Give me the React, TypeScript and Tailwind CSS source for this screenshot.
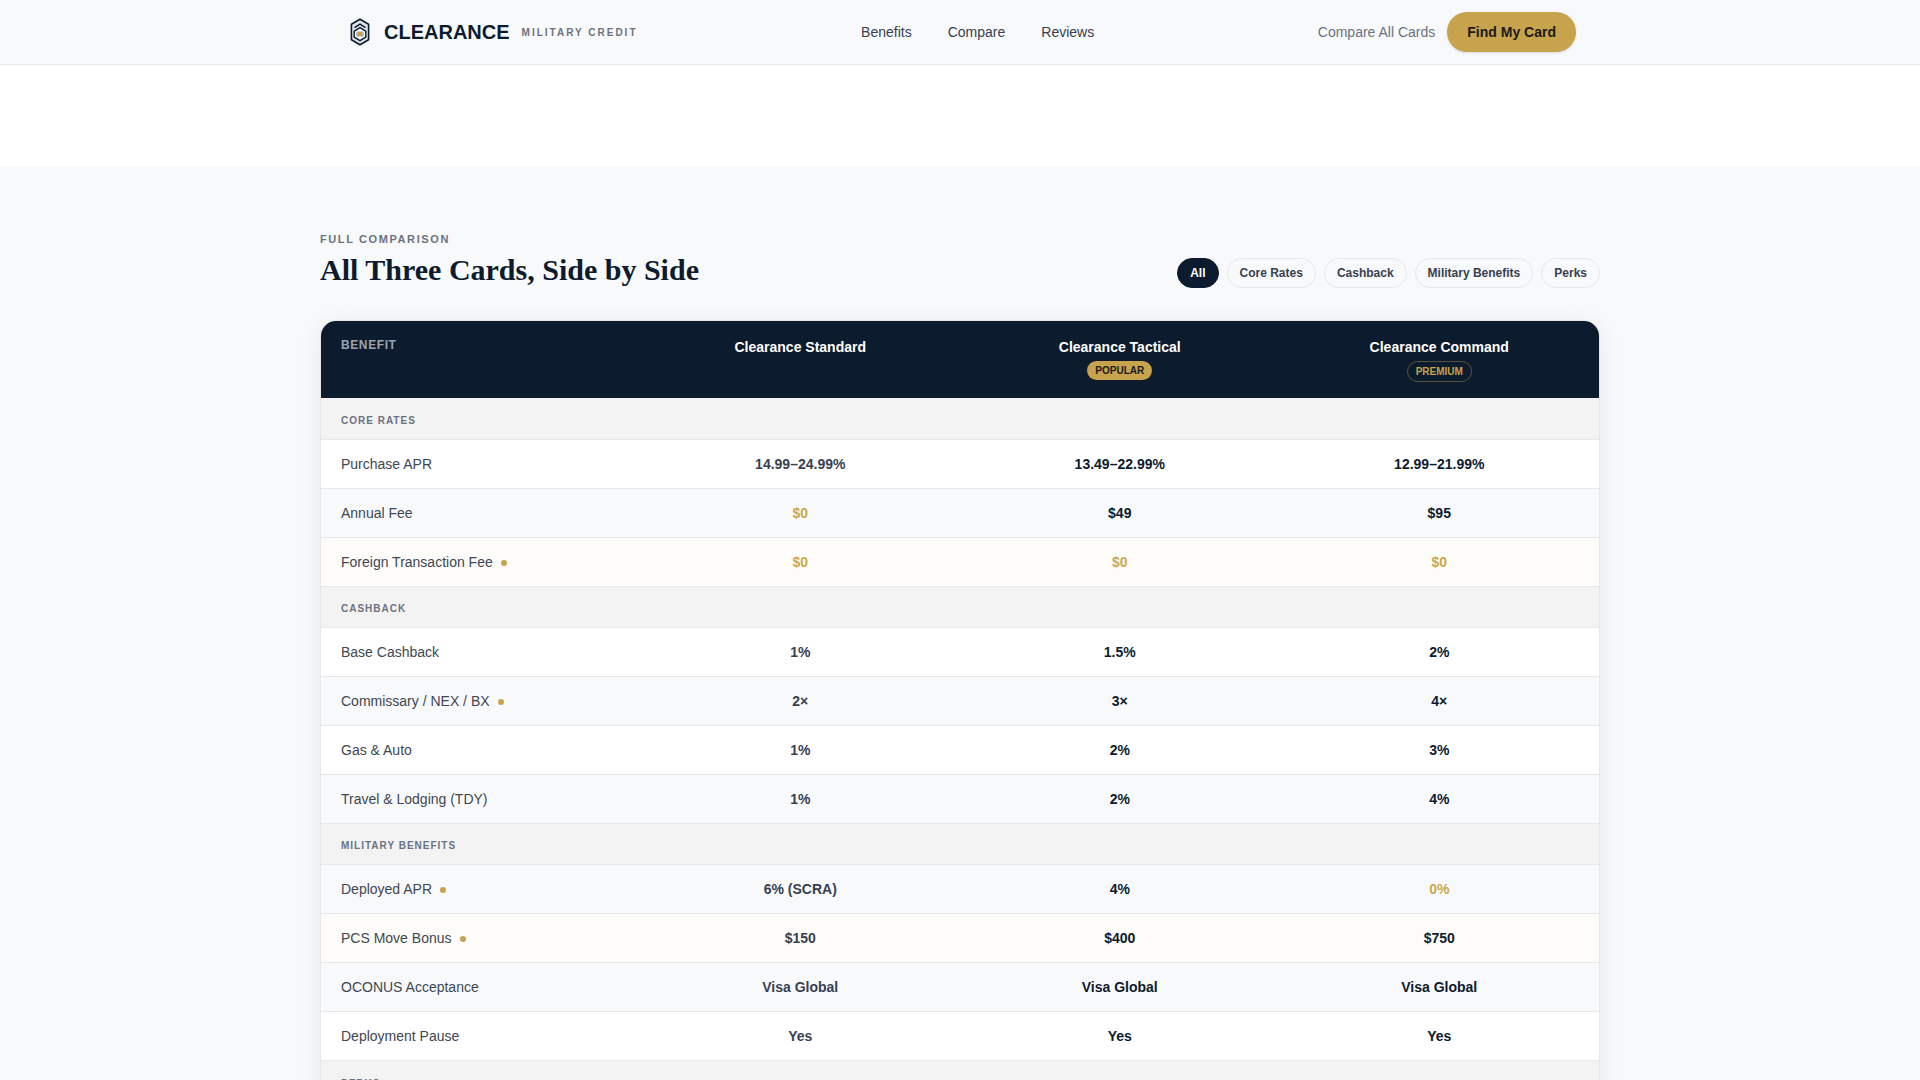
const sections = [
  {
    title: "Core Rates",
    height: "h-[41.5px]",
    rows: [
      { label: "Purchase APR", values: ["14.99–24.99%", "13.49–22.99%", "12.99–21.99%"] },
      { label: "Annual Fee", values: ["$0", "$49", "$95"], gold: [0] },
      { label: "Foreign Transaction Fee", values: ["$0", "$0", "$0"], gold: [0, 1, 2], dot: true, highlight: true },
    ],
  },
  {
    title: "Cashback",
    height: "h-[41.5px]",
    rows: [
      { label: "Base Cashback", values: ["1%", "1.5%", "2%"] },
      { label: "Commissary / NEX / BX", values: ["2×", "3×", "4×"], dot: true },
      { label: "Gas & Auto", values: ["1%", "2%", "3%"] },
      { label: "Travel & Lodging (TDY)", values: ["1%", "2%", "4%"] },
    ],
  },
  {
    title: "Military Benefits",
    height: "h-[41px]",
    rows: [
      { label: "Deployed APR", values: ["6% (SCRA)", "4%", "0%"], gold: [2], dot: true },
      { label: "PCS Move Bonus", values: ["$150", "$400", "$750"], dot: true, highlight: true },
      { label: "OCONUS Acceptance", values: ["Visa Global", "Visa Global", "Visa Global"] },
      { label: "Deployment Pause", values: ["Yes", "Yes", "Yes"] },
    ],
  },
  {
    title: "Perks",
    height: "h-[41.5px]",
    rows: [{ label: "Lounge Access", values: ["—", "Yes", "Yes"] }],
  },
]

const filters = ["All", "Core Rates", "Cashback", "Military Benefits", "Perks"]

function Logo() {
  return (
    <svg width="22" height="28" viewBox="0 0 22 28" fill="none">
      <path d="M11 1.2 19.6 6.2V21.8L11 26.8 2.4 21.8V6.2Z" fill="#dfe3e8" stroke="#0d1b2e" strokeWidth="1.6" />
      <path d="M5.5 9.6 11 6.2 16.5 9.6" stroke="#0d1b2e" strokeWidth="1.5" />
      <path d="M5.2 13.2 11 9.6 16.8 13.2V19.2L11 22.6 5.2 19.2Z" fill="#f8f9fb" stroke="#0d1b2e" strokeWidth="1.4" />
      <rect x="8.8" y="13.6" width="4.4" height="4.8" fill="#c6a34c" />
      <path d="M7.5 13.6H8.8V18.4H7.5ZM13.2 13.6H14.5V18.4H13.2Z" fill="#94a3b8" />
    </svg>
  )
}

function Dot() {
  return <span className="ml-2 inline-block h-[6px] w-[6px] rounded-full bg-[#c6a34c] align-[1px]" />
}

export default function App() {
  return (
    <div className="h-screen overflow-hidden bg-white font-['Liberation_Sans',Arial,sans-serif] text-[#0d1b2e]">
      <nav className="h-[65px] border-b border-[#e5e7eb] bg-[#f8f9fb]">
        <div className="mx-auto flex h-full max-w-[1280px] items-center justify-between pr-6 pl-[29px]">
          <div className="flex items-center">
            <Logo />
            <span className="ml-[13px] text-xl font-bold">CLEARANCE</span>
            <span className="ml-3 text-[10px] font-semibold tracking-[2px] text-[#6b7280]">MILITARY CREDIT</span>
          </div>
          <div className="flex items-center gap-9 text-sm text-[#374151]">
            <a>Benefits</a>
            <a>Compare</a>
            <a>Reviews</a>
          </div>
          <div className="flex items-center gap-3">
            <a className="text-sm text-[#6b7280]">Compare All Cards</a>
            <button className="h-10 rounded-full bg-[#c6a34c] px-5 text-sm font-bold text-[#1a1a1a] shadow-sm">Find My Card</button>
          </div>
        </div>
      </nav>

      <div className="h-[102px] bg-white" />

      <section className="h-full bg-[#f8f9fb] pt-[64px]">
        <div className="mx-auto max-w-[1280px]">
          <div className="mb-8 flex items-end justify-between">
            <div>
              <p className="text-[11px] font-semibold tracking-[1.6px] text-[#6b7280]">FULL COMPARISON</p>
              <h2 className="mt-1 font-['Liberation_Serif',serif] text-3xl font-bold">All Three Cards, Side by Side</h2>
            </div>
            <div className="flex items-center gap-2">
              {filters.map((f, i) => (
                <button
                  key={f}
                  className={
                    i === 0
                      ? "h-[30px] rounded-full border border-[#0d1b2e] bg-[#0d1b2e] px-3 text-xs font-semibold text-white"
                      : "h-[30px] rounded-full border border-[#e5e7eb] px-3 text-xs font-semibold text-[#374151]"
                  }
                >
                  {f}
                </button>
              ))}
            </div>
          </div>

          <div className="overflow-hidden rounded-2xl border border-[#e5e7eb] bg-white shadow-[0_4px_24px_rgba(13,27,46,0.07)]">
            <table className="w-full table-fixed border-separate border-spacing-0 text-sm">
              <thead>
                <tr className="h-[77.5px] bg-[#0d1b2e] align-top text-white">
                  <th className="px-5 pt-4 text-left text-xs font-semibold tracking-[0.6px] text-[#9ca3af]">BENEFIT</th>
                  <th className="px-5 pt-4 font-semibold">Clearance Standard</th>
                  <th className="px-5 pt-4 font-semibold">
                    Clearance Tactical
                    <div className="mt-[2px]">
                      <span className="inline-block rounded-full bg-[#c6a34c] px-2 py-[3px] text-[10px] leading-[13px] font-bold text-[#1a1a1a]">POPULAR</span>
                    </div>
                  </th>
                  <th className="px-5 pt-4 font-semibold">
                    Clearance Command
                    <div className="mt-[3px]">
                      <span className="inline-block rounded-full border border-[#c6a34c]/40 px-2 py-[3px] text-[10px] leading-[13px] font-bold text-[#c6a34c]">PREMIUM</span>
                    </div>
                  </th>
                </tr>
              </thead>
              <tbody>
                {sections.map((section) => (
                  <SectionRows key={section.title} section={section} />
                ))}
              </tbody>
            </table>
          </div>
        </div>
      </section>
    </div>
  )
}

type Row = { label: string; values: string[]; gold?: number[]; dot?: boolean; highlight?: boolean }

function SectionRows({ section }: { section: { title: string; height: string; rows: Row[] } }) {
  return (
    <>
      <tr className={`${section.height} bg-[#f3f3f4]`}>
        <td colSpan={4} className="border-b border-[#e5e7eb] px-5 pt-[5px] text-[10px] font-bold tracking-[1px] text-[#6b7280] uppercase">
          {section.title}
        </td>
      </tr>
      {section.rows.map((row) => (
        <tr key={row.label} className={`h-[49px] ${row.highlight ? "bg-[#fdfcf8]" : "bg-white odd:bg-[#f8f9fb]"}`}>
          <td className="border-b border-[#e5e7eb] px-5 text-[#404753]">
            {row.label}
            {row.dot && <Dot />}
          </td>
          {row.values.map((v, col) => (
            <td
              key={col}
              className={`border-b border-[#e5e7eb] px-5 text-center font-semibold ${row.gold?.includes(col) ? "text-[#c9a84c]" : col === 0 ? "text-[#374151]" : "text-[#0d1b2e]"}`}
            >
              {v}
            </td>
          ))}
        </tr>
      ))}
    </>
  )
}
